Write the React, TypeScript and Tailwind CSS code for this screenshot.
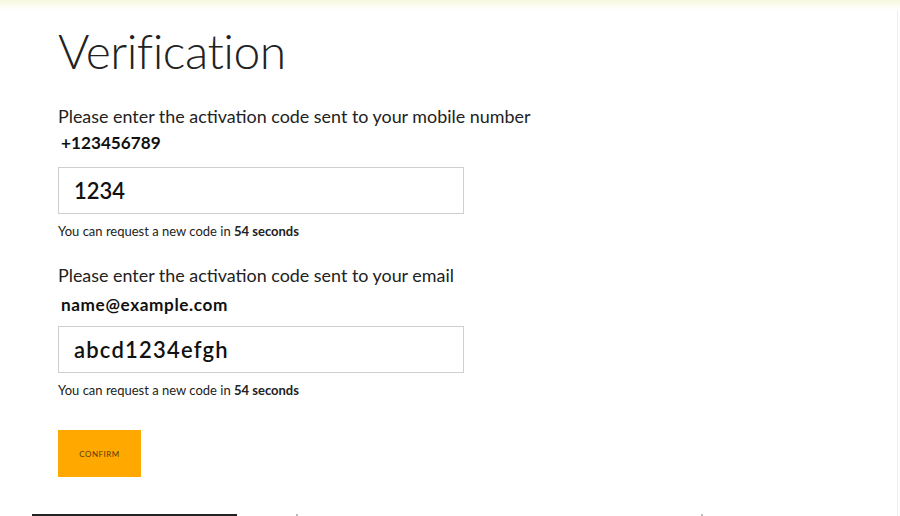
import React from "react";

function Field({ label, value, code, wide }: { label: string; value: string; code: string; wide?: boolean }) {
  return (
    <div className="flex flex-col">
      <p className="text-[17.9px] leading-[22px] text-[#222]">{label}</p>
      <p className={`ml-[3px] text-[17.2px] font-bold leading-[20px] text-[#111] ${wide ? "mt-[9px] tracking-[0.6px]" : "mt-[6px]"}`}>{value}</p>
      <div className={`w-[406px] h-[47px] border border-[#cfcfcf] flex items-center pl-[15px] text-[22px] font-semibold text-[#111] ${wide ? "mt-[11px] tracking-[1.2px]" : "mt-[14px]"}`}>{code}</div>
      <p className="mt-[9px] text-[13px] leading-[16px] text-[#222]">You can request a new code in <span className="font-bold">54 seconds</span></p>
    </div>
  );
}

export default function App() {
  return (
    <div className="relative w-[900px] h-[516px] overflow-hidden bg-white" style={{ fontFamily: "Lato, 'Open Sans', sans-serif" }}>
      <div className="absolute top-0 left-0 right-0 h-[10px] bg-gradient-to-b from-[#f6f8dc] to-white" />
      <div className="flex flex-col items-start pl-[58px] pt-[21px]">
        <h1 className="text-[48px] font-light leading-[60px] text-[#222] tracking-[-0.5px]">Verification</h1>
        <div className="mt-[24px] flex flex-col gap-[25px]">
          <Field label="Please enter the activation code sent to your mobile number" value="+123456789" code="1234" />
          <Field label="Please enter the activation code sent to your email" value="name@example.com" code="abcd1234efgh" wide />
        </div>
        <button className="mt-[32px] w-[83px] h-[47px] bg-[#ffa800] text-[8px] tracking-[0.5px] text-[#5a3a00] flex items-center justify-center">CONFIRM</button>
      </div>
      <div className="absolute bottom-0 left-[32px] w-[205px] h-[2px] bg-[#222]" />
      <div className="absolute bottom-0 left-[296px] w-[2px] h-[2px] bg-[#bbb]" />
      <div className="absolute bottom-0 left-[701px] w-[2px] h-[2px] bg-[#bbb]" />
      <div className="absolute top-[10px] bottom-0 right-[2px] w-[1px] bg-[#eee]" />
    </div>
  );
}
